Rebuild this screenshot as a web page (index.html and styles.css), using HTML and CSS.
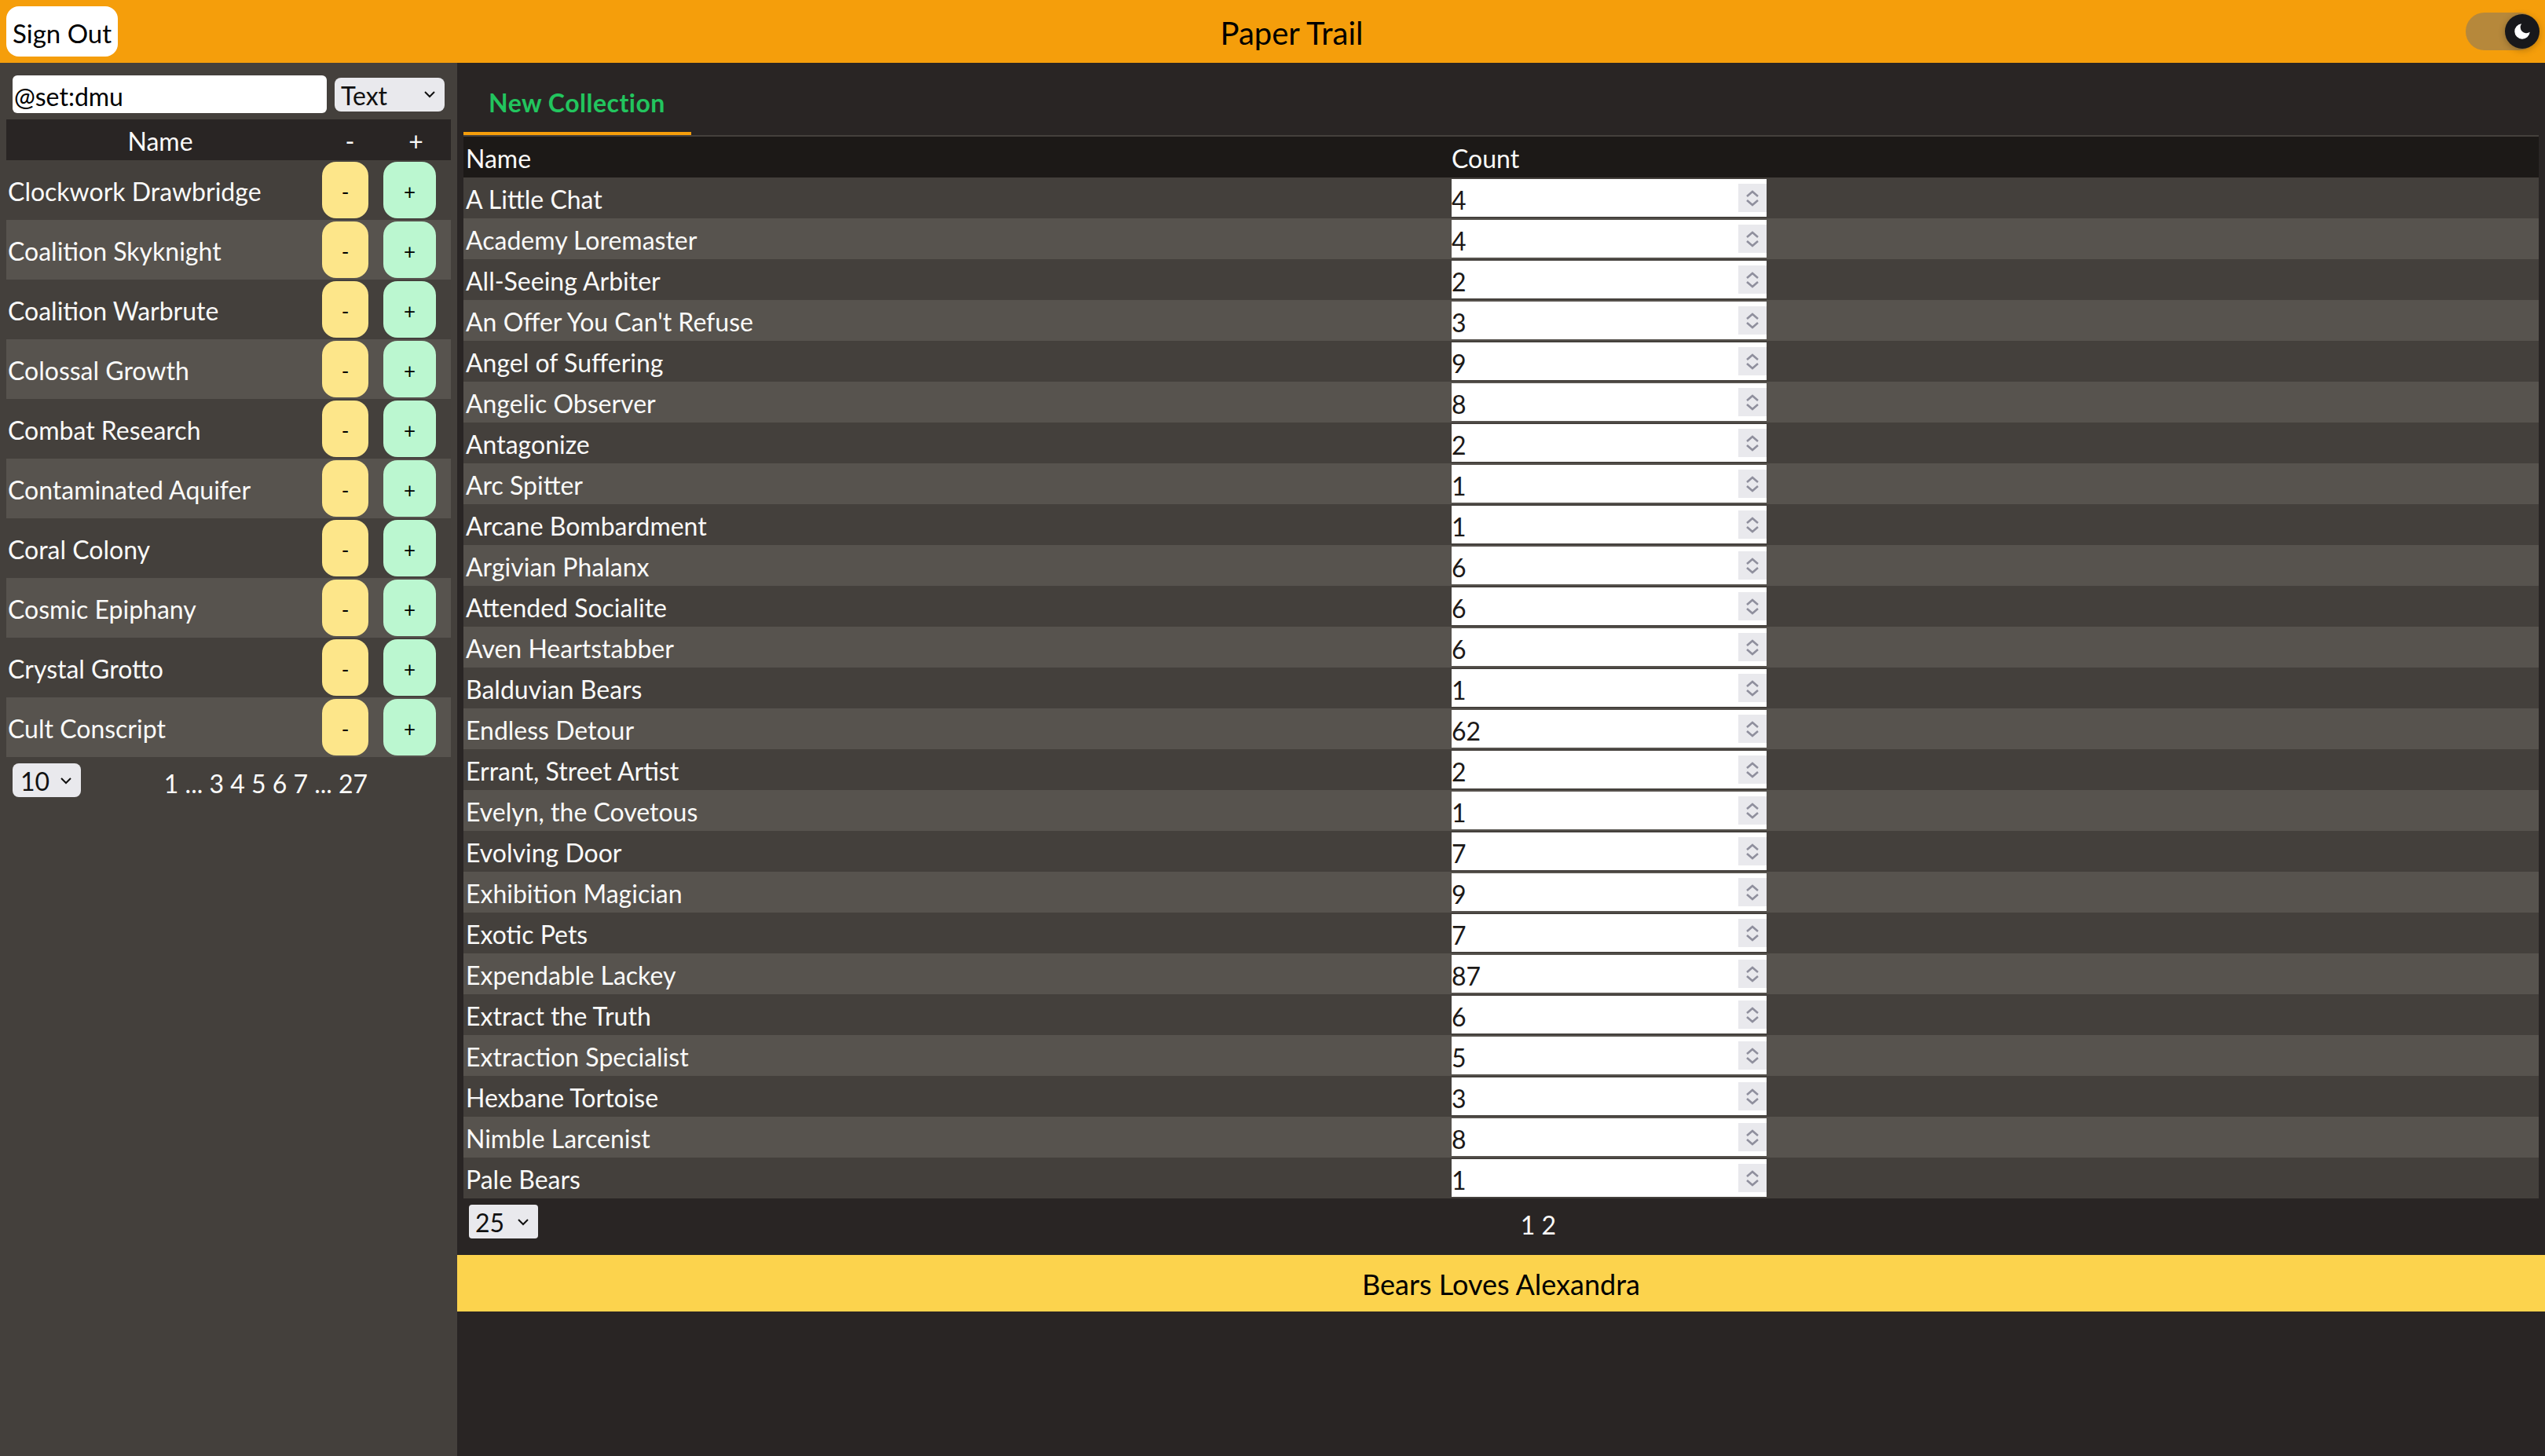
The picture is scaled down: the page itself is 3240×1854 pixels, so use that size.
FILE: index.html
```html
<!DOCTYPE html>
<html lang="en">
<head>
<meta charset="utf-8">
<title>Paper Trail</title>
<link rel="stylesheet" href="styles.css">
</head>
<body>
<header class="topbar">
  <button class="signout">Sign Out</button>
  <div class="title">Paper Trail</div>
  <div class="toggle">
    <span class="knob">
      <svg class="moon" viewBox="0 0 24 24" width="26" height="26"><path d="M21 12.79A9 9 0 1 1 11.21 3 7 7 0 0 0 21 12.79z" fill="#fff"/></svg>
    </span>
  </div>
</header>
<div class="layout">
  <aside class="sidebar">
    <div class="search">
      <input class="query" type="text" value="@set:dmu">
      <div class="fakeselect type">Text<svg class="chev" viewBox="0 0 16 12" width="16" height="12"><polyline points="2,3 8,9 14,3" fill="none" stroke="#111" stroke-width="2"/></svg></div>
    </div>
    <div class="ltable">
      <div class="lrow lhead"><span class="lname hc">Name</span><span class="hminus">-</span><span class="hplus">+</span></div>
      <div class="lrow"><span class="lname">Clockwork Drawbridge</span><span class="cell"><button class="btn minus">-</button></span><span class="cell"><button class="btn plus">+</button></span></div>
      <div class="lrow"><span class="lname">Coalition Skyknight</span><span class="cell"><button class="btn minus">-</button></span><span class="cell"><button class="btn plus">+</button></span></div>
      <div class="lrow"><span class="lname">Coalition Warbrute</span><span class="cell"><button class="btn minus">-</button></span><span class="cell"><button class="btn plus">+</button></span></div>
      <div class="lrow"><span class="lname">Colossal Growth</span><span class="cell"><button class="btn minus">-</button></span><span class="cell"><button class="btn plus">+</button></span></div>
      <div class="lrow"><span class="lname">Combat Research</span><span class="cell"><button class="btn minus">-</button></span><span class="cell"><button class="btn plus">+</button></span></div>
      <div class="lrow"><span class="lname">Contaminated Aquifer</span><span class="cell"><button class="btn minus">-</button></span><span class="cell"><button class="btn plus">+</button></span></div>
      <div class="lrow"><span class="lname">Coral Colony</span><span class="cell"><button class="btn minus">-</button></span><span class="cell"><button class="btn plus">+</button></span></div>
      <div class="lrow"><span class="lname">Cosmic Epiphany</span><span class="cell"><button class="btn minus">-</button></span><span class="cell"><button class="btn plus">+</button></span></div>
      <div class="lrow"><span class="lname">Crystal Grotto</span><span class="cell"><button class="btn minus">-</button></span><span class="cell"><button class="btn plus">+</button></span></div>
      <div class="lrow"><span class="lname">Cult Conscript</span><span class="cell"><button class="btn minus">-</button></span><span class="cell"><button class="btn plus">+</button></span></div>
    </div>
    <div class="pager lpager">
      <div class="fakeselect size10">10<svg class="chev" viewBox="0 0 16 12" width="16" height="12"><polyline points="2,3 8,9 14,3" fill="none" stroke="#111" stroke-width="2"/></svg></div>
      <div class="pages">1 ... 3 4 5 6 7 ... 27</div>
    </div>
  </aside>
  <main class="main">
    <div class="content">
      <div class="tabs"><div class="tab">New Collection</div></div>
      <div class="mtable">
        <div class="mrow mhead"><span class="mname">Name</span><span class="mcount hcount">Count</span></div>
        <div class="mrow"><span class="mname">A Little Chat</span><span class="mcount"><span class="num"><input type="text" value="4"><span class="spin"><svg viewBox="0 0 36 36" width="36" height="36"><polyline points="11,16 18,10 25,16" fill="none" stroke="#8f8f9d" stroke-width="2.6"/><polyline points="11,21 18,27 25,21" fill="none" stroke="#8f8f9d" stroke-width="2.6"/></svg></span></span></span></div>
        <div class="mrow"><span class="mname">Academy Loremaster</span><span class="mcount"><span class="num"><input type="text" value="4"><span class="spin"><svg viewBox="0 0 36 36" width="36" height="36"><polyline points="11,16 18,10 25,16" fill="none" stroke="#8f8f9d" stroke-width="2.6"/><polyline points="11,21 18,27 25,21" fill="none" stroke="#8f8f9d" stroke-width="2.6"/></svg></span></span></span></div>
        <div class="mrow"><span class="mname">All-Seeing Arbiter</span><span class="mcount"><span class="num"><input type="text" value="2"><span class="spin"><svg viewBox="0 0 36 36" width="36" height="36"><polyline points="11,16 18,10 25,16" fill="none" stroke="#8f8f9d" stroke-width="2.6"/><polyline points="11,21 18,27 25,21" fill="none" stroke="#8f8f9d" stroke-width="2.6"/></svg></span></span></span></div>
        <div class="mrow"><span class="mname">An Offer You Can't Refuse</span><span class="mcount"><span class="num"><input type="text" value="3"><span class="spin"><svg viewBox="0 0 36 36" width="36" height="36"><polyline points="11,16 18,10 25,16" fill="none" stroke="#8f8f9d" stroke-width="2.6"/><polyline points="11,21 18,27 25,21" fill="none" stroke="#8f8f9d" stroke-width="2.6"/></svg></span></span></span></div>
        <div class="mrow"><span class="mname">Angel of Suffering</span><span class="mcount"><span class="num"><input type="text" value="9"><span class="spin"><svg viewBox="0 0 36 36" width="36" height="36"><polyline points="11,16 18,10 25,16" fill="none" stroke="#8f8f9d" stroke-width="2.6"/><polyline points="11,21 18,27 25,21" fill="none" stroke="#8f8f9d" stroke-width="2.6"/></svg></span></span></span></div>
        <div class="mrow"><span class="mname">Angelic Observer</span><span class="mcount"><span class="num"><input type="text" value="8"><span class="spin"><svg viewBox="0 0 36 36" width="36" height="36"><polyline points="11,16 18,10 25,16" fill="none" stroke="#8f8f9d" stroke-width="2.6"/><polyline points="11,21 18,27 25,21" fill="none" stroke="#8f8f9d" stroke-width="2.6"/></svg></span></span></span></div>
        <div class="mrow"><span class="mname">Antagonize</span><span class="mcount"><span class="num"><input type="text" value="2"><span class="spin"><svg viewBox="0 0 36 36" width="36" height="36"><polyline points="11,16 18,10 25,16" fill="none" stroke="#8f8f9d" stroke-width="2.6"/><polyline points="11,21 18,27 25,21" fill="none" stroke="#8f8f9d" stroke-width="2.6"/></svg></span></span></span></div>
        <div class="mrow"><span class="mname">Arc Spitter</span><span class="mcount"><span class="num"><input type="text" value="1"><span class="spin"><svg viewBox="0 0 36 36" width="36" height="36"><polyline points="11,16 18,10 25,16" fill="none" stroke="#8f8f9d" stroke-width="2.6"/><polyline points="11,21 18,27 25,21" fill="none" stroke="#8f8f9d" stroke-width="2.6"/></svg></span></span></span></div>
        <div class="mrow"><span class="mname">Arcane Bombardment</span><span class="mcount"><span class="num"><input type="text" value="1"><span class="spin"><svg viewBox="0 0 36 36" width="36" height="36"><polyline points="11,16 18,10 25,16" fill="none" stroke="#8f8f9d" stroke-width="2.6"/><polyline points="11,21 18,27 25,21" fill="none" stroke="#8f8f9d" stroke-width="2.6"/></svg></span></span></span></div>
        <div class="mrow"><span class="mname">Argivian Phalanx</span><span class="mcount"><span class="num"><input type="text" value="6"><span class="spin"><svg viewBox="0 0 36 36" width="36" height="36"><polyline points="11,16 18,10 25,16" fill="none" stroke="#8f8f9d" stroke-width="2.6"/><polyline points="11,21 18,27 25,21" fill="none" stroke="#8f8f9d" stroke-width="2.6"/></svg></span></span></span></div>
        <div class="mrow"><span class="mname">Attended Socialite</span><span class="mcount"><span class="num"><input type="text" value="6"><span class="spin"><svg viewBox="0 0 36 36" width="36" height="36"><polyline points="11,16 18,10 25,16" fill="none" stroke="#8f8f9d" stroke-width="2.6"/><polyline points="11,21 18,27 25,21" fill="none" stroke="#8f8f9d" stroke-width="2.6"/></svg></span></span></span></div>
        <div class="mrow"><span class="mname">Aven Heartstabber</span><span class="mcount"><span class="num"><input type="text" value="6"><span class="spin"><svg viewBox="0 0 36 36" width="36" height="36"><polyline points="11,16 18,10 25,16" fill="none" stroke="#8f8f9d" stroke-width="2.6"/><polyline points="11,21 18,27 25,21" fill="none" stroke="#8f8f9d" stroke-width="2.6"/></svg></span></span></span></div>
        <div class="mrow"><span class="mname">Balduvian Bears</span><span class="mcount"><span class="num"><input type="text" value="1"><span class="spin"><svg viewBox="0 0 36 36" width="36" height="36"><polyline points="11,16 18,10 25,16" fill="none" stroke="#8f8f9d" stroke-width="2.6"/><polyline points="11,21 18,27 25,21" fill="none" stroke="#8f8f9d" stroke-width="2.6"/></svg></span></span></span></div>
        <div class="mrow"><span class="mname">Endless Detour</span><span class="mcount"><span class="num"><input type="text" value="62"><span class="spin"><svg viewBox="0 0 36 36" width="36" height="36"><polyline points="11,16 18,10 25,16" fill="none" stroke="#8f8f9d" stroke-width="2.6"/><polyline points="11,21 18,27 25,21" fill="none" stroke="#8f8f9d" stroke-width="2.6"/></svg></span></span></span></div>
        <div class="mrow"><span class="mname">Errant, Street Artist</span><span class="mcount"><span class="num"><input type="text" value="2"><span class="spin"><svg viewBox="0 0 36 36" width="36" height="36"><polyline points="11,16 18,10 25,16" fill="none" stroke="#8f8f9d" stroke-width="2.6"/><polyline points="11,21 18,27 25,21" fill="none" stroke="#8f8f9d" stroke-width="2.6"/></svg></span></span></span></div>
        <div class="mrow"><span class="mname">Evelyn, the Covetous</span><span class="mcount"><span class="num"><input type="text" value="1"><span class="spin"><svg viewBox="0 0 36 36" width="36" height="36"><polyline points="11,16 18,10 25,16" fill="none" stroke="#8f8f9d" stroke-width="2.6"/><polyline points="11,21 18,27 25,21" fill="none" stroke="#8f8f9d" stroke-width="2.6"/></svg></span></span></span></div>
        <div class="mrow"><span class="mname">Evolving Door</span><span class="mcount"><span class="num"><input type="text" value="7"><span class="spin"><svg viewBox="0 0 36 36" width="36" height="36"><polyline points="11,16 18,10 25,16" fill="none" stroke="#8f8f9d" stroke-width="2.6"/><polyline points="11,21 18,27 25,21" fill="none" stroke="#8f8f9d" stroke-width="2.6"/></svg></span></span></span></div>
        <div class="mrow"><span class="mname">Exhibition Magician</span><span class="mcount"><span class="num"><input type="text" value="9"><span class="spin"><svg viewBox="0 0 36 36" width="36" height="36"><polyline points="11,16 18,10 25,16" fill="none" stroke="#8f8f9d" stroke-width="2.6"/><polyline points="11,21 18,27 25,21" fill="none" stroke="#8f8f9d" stroke-width="2.6"/></svg></span></span></span></div>
        <div class="mrow"><span class="mname">Exotic Pets</span><span class="mcount"><span class="num"><input type="text" value="7"><span class="spin"><svg viewBox="0 0 36 36" width="36" height="36"><polyline points="11,16 18,10 25,16" fill="none" stroke="#8f8f9d" stroke-width="2.6"/><polyline points="11,21 18,27 25,21" fill="none" stroke="#8f8f9d" stroke-width="2.6"/></svg></span></span></span></div>
        <div class="mrow"><span class="mname">Expendable Lackey</span><span class="mcount"><span class="num"><input type="text" value="87"><span class="spin"><svg viewBox="0 0 36 36" width="36" height="36"><polyline points="11,16 18,10 25,16" fill="none" stroke="#8f8f9d" stroke-width="2.6"/><polyline points="11,21 18,27 25,21" fill="none" stroke="#8f8f9d" stroke-width="2.6"/></svg></span></span></span></div>
        <div class="mrow"><span class="mname">Extract the Truth</span><span class="mcount"><span class="num"><input type="text" value="6"><span class="spin"><svg viewBox="0 0 36 36" width="36" height="36"><polyline points="11,16 18,10 25,16" fill="none" stroke="#8f8f9d" stroke-width="2.6"/><polyline points="11,21 18,27 25,21" fill="none" stroke="#8f8f9d" stroke-width="2.6"/></svg></span></span></span></div>
        <div class="mrow"><span class="mname">Extraction Specialist</span><span class="mcount"><span class="num"><input type="text" value="5"><span class="spin"><svg viewBox="0 0 36 36" width="36" height="36"><polyline points="11,16 18,10 25,16" fill="none" stroke="#8f8f9d" stroke-width="2.6"/><polyline points="11,21 18,27 25,21" fill="none" stroke="#8f8f9d" stroke-width="2.6"/></svg></span></span></span></div>
        <div class="mrow"><span class="mname">Hexbane Tortoise</span><span class="mcount"><span class="num"><input type="text" value="3"><span class="spin"><svg viewBox="0 0 36 36" width="36" height="36"><polyline points="11,16 18,10 25,16" fill="none" stroke="#8f8f9d" stroke-width="2.6"/><polyline points="11,21 18,27 25,21" fill="none" stroke="#8f8f9d" stroke-width="2.6"/></svg></span></span></span></div>
        <div class="mrow"><span class="mname">Nimble Larcenist</span><span class="mcount"><span class="num"><input type="text" value="8"><span class="spin"><svg viewBox="0 0 36 36" width="36" height="36"><polyline points="11,16 18,10 25,16" fill="none" stroke="#8f8f9d" stroke-width="2.6"/><polyline points="11,21 18,27 25,21" fill="none" stroke="#8f8f9d" stroke-width="2.6"/></svg></span></span></span></div>
        <div class="mrow"><span class="mname">Pale Bears</span><span class="mcount"><span class="num"><input type="text" value="1"><span class="spin"><svg viewBox="0 0 36 36" width="36" height="36"><polyline points="11,16 18,10 25,16" fill="none" stroke="#8f8f9d" stroke-width="2.6"/><polyline points="11,21 18,27 25,21" fill="none" stroke="#8f8f9d" stroke-width="2.6"/></svg></span></span></span></div>
      </div>
      <div class="pager mpager">
        <div class="fakeselect size25">25<svg class="chev" viewBox="0 0 16 12" width="16" height="12"><polyline points="2,3 8,9 14,3" fill="none" stroke="#111" stroke-width="2"/></svg></div>
        <div class="pages">1 2</div>
      </div>
    </div>
    <div class="banner">Bears Loves Alexandra</div>
  </main>
</div>
</body>
</html>
```

FILE: styles.css
```css
* { box-sizing: border-box; }
html, body { margin: 0; padding: 0; }
body {
  background: #292524;
  color: #fafaf9;
  font-family: "Lato", "Open Sans", sans-serif;
  font-size: 32px;
  line-height: 48px;
  min-height: 100vh;
}

/* top bar */
.topbar {
  height: 80px;
  background: #f59e0b;
  display: flex;
  align-items: center;
  justify-content: space-between;
  padding: 0 9px 0 8px;
}
.signout {
  height: 64px;
  padding: 4px 8px 0;
  border: none;
  border-radius: 16px;
  background: #fff;
  color: #000;
  font-family: inherit;
  font-size: 33px;
  line-height: 48px;
}
.title {
  color: #000;
  font-size: 40px;
  line-height: 56px;
  padding-top: 3px;
}
.toggle {
  position: relative;
  width: 92px;
  height: 48px;
  border-radius: 24px;
  background: rgba(120, 113, 108, 0.5);
}
.knob {
  position: absolute;
  right: -2px;
  top: 2px;
  width: 44px;
  height: 44px;
  border-radius: 50%;
  background: #18181b;
  box-shadow: 0 2px 8px rgba(0, 0, 0, 0.25);
  display: flex;
  align-items: center;
  justify-content: center;
}
.moon { width: 26px; height: 26px; }

/* layout */
.layout {
  display: flex;
  min-height: calc(100vh - 80px);
}
.sidebar {
  width: 582px;
  flex: none;
  background: #44403c;
  padding: 8px;
}
.search {
  display: flex;
  align-items: center;
  padding: 8px 0 8px 8px;
}
.query {
  width: 400px;
  height: 48px;
  border: none;
  border-radius: 6px;
  background: #fff;
  color: #000;
  font-family: inherit;
  font-size: 32px;
  padding: 4px 2px 0;
  outline: none;
}
.fakeselect {
  display: flex;
  align-items: center;
  justify-content: space-between;
  height: 43px;
  background: #e9e9ed;
  color: #111;
  border-radius: 8px;
  font-size: 32px;
  line-height: 40px;
  padding-top: 3px;
}
.chev { width: 16px; height: 12px; flex: none; margin-top: -3px; }
.type { width: 140px; margin-left: 10px; padding-left: 8px; padding-right: 11px; }
.size10 { width: 87px; padding-left: 10px; padding-right: 11px; }
.size25 { width: 88px; margin-left: 7px; padding-left: 8px; padding-right: 11px; border-radius: 4px; }

/* left table */
.ltable { width: 566px; }
.lrow {
  display: grid;
  grid-template-columns: 392px 79px 95px;
  align-items: center;
  height: 76px;
}
.lrow:nth-child(even) { background: #44403c; }
.lrow:nth-child(odd) { background: #57534e; }
.lrow.lhead {
  height: 52px;
  background: #292524;
  text-align: center;
}
.lname, .hminus, .hplus { padding-top: 4px; }
.lname { padding-left: 2px; white-space: nowrap; }
.lname.hc { padding-left: 0; }
.hminus { padding-left: 12px; }
.hplus { padding-left: 6px; }
.cell { display: flex; align-items: center; }
.btn {
  height: 72px;
  border: none;
  border-radius: 18px;
  color: #000;
  font-family: inherit;
  font-size: 26px;
  padding: 3px 0 0;
}
.minus { width: 59px; margin-left: 10px; background: #fde68a; }
.plus { width: 67px; margin-left: 9px; background: #bbf7d0; }

/* pager */
.pager {
  display: flex;
  align-items: flex-start;
  padding: 8px 0;
}
.lpager { padding-left: 8px; }
.pages {
  flex: 1;
  height: 48px;
  text-align: center;
  line-height: 45px;
  padding-top: 3px;
  white-space: nowrap;
}

/* main */
.main {
  flex: 1;
  display: flex;
  flex-direction: column;
}
.content { padding: 8px; }
.tabs {
  display: flex;
  border-bottom: 2px solid #44403c;
}
.tab {
  padding: 19px 33px 13px 32px;
  line-height: 48px;
  color: #22c55e;
  font-weight: 700;
  letter-spacing: 0.5px;
  border-bottom: 4px solid #f59e0b;
}
.mrow {
  display: grid;
  grid-template-columns: 1258px 1fr;
  align-items: center;
  height: 52px;
}
.mrow:nth-child(even) { background: #44403c; }
.mrow:nth-child(odd) { background: #57534e; }
.mrow.mhead { background: #1c1917; }
.mname, .hcount { padding-top: 4px; }
.mname { padding-left: 3px; white-space: nowrap; }
.num {
  position: relative;
  display: block;
  width: 401px;
  height: 48px;
}
.num input {
  display: block;
  width: 100%;
  height: 48px;
  border: none;
  background: #fff;
  color: #1c1917;
  font-family: inherit;
  font-size: 32px;
  padding: 4px 0 0;
  outline: none;
}
.spin {
  position: absolute;
  right: 0;
  top: 6px;
  width: 36px;
  height: 36px;
  background: #e9e9ed;
  display: flex;
}
.spin svg { width: 36px; height: 36px; }

.banner {
  height: 72px;
  line-height: 70px;
  background: #fcd34d;
  color: #000;
  text-align: center;
  font-size: 36px;
  padding-top: 2px;
}
```
